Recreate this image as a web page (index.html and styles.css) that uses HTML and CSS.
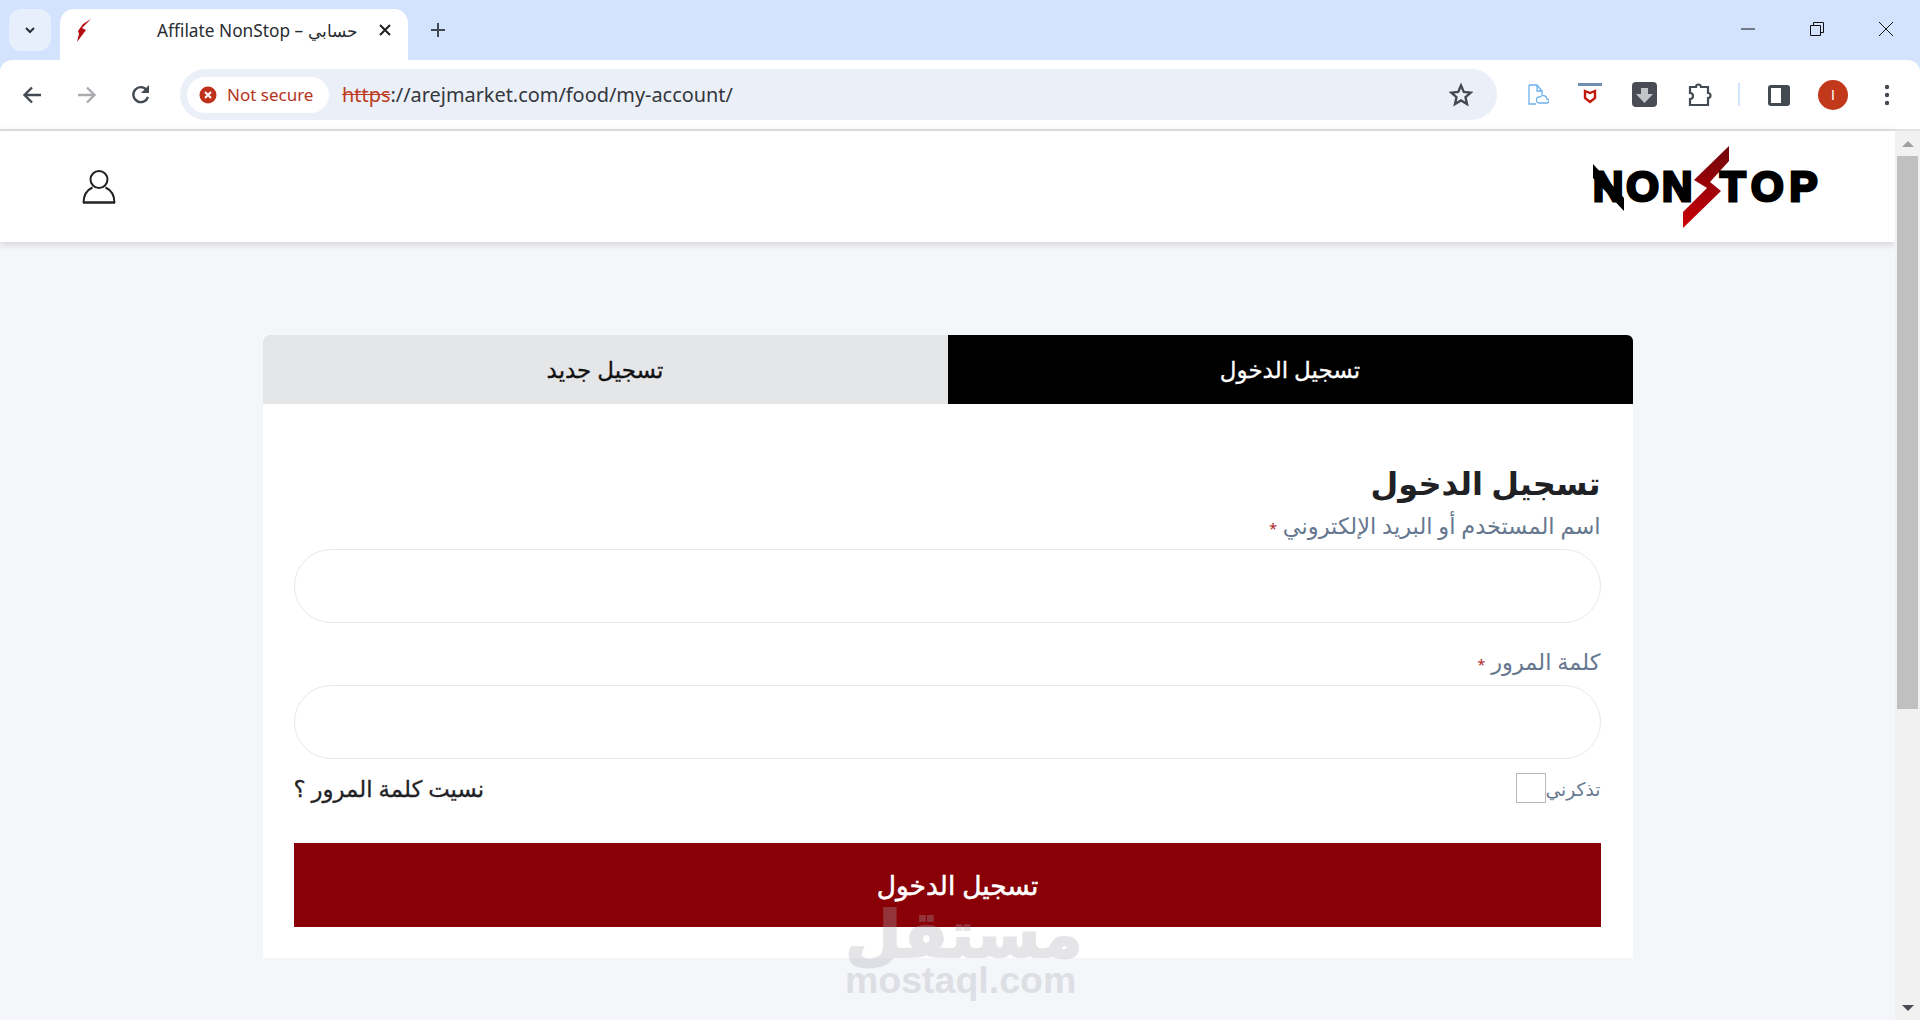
FILE: index.html
```html
<!DOCTYPE html>
<html lang="en">
<head>
    <meta charset="UTF-8">
    <title>Affiliate NonStop – حسابي</title>
    <link rel="stylesheet" href="styles.css">
</head>
<body>
    <div class="browser">
        <div class="tabstrip">
            <div class="tab-search">
                <svg width="14" height="14" viewBox="0 0 14 14"><path d="M3 5l4 4 4-4" fill="none" stroke="#2b2f36" stroke-width="2"/></svg>
            </div>
            <div class="tab">
                <svg class="favicon" width="14" height="23" viewBox="0 0 14 23"><path d="M14 0L5 9l4 2-9 12 2-8-1-3 5-7z" fill="#b50d12"/></svg>
                <span class="tab-title">Affilate NonStop – حسابي</span>
                <svg class="tab-close" width="12" height="12" viewBox="0 0 12 12"><path d="M1 1l10 10M11 1L1 11" fill="none" stroke="#1f1f1f" stroke-width="2"/></svg>
            </div>
            <svg class="tab-new" width="16" height="16" viewBox="0 0 16 16"><path d="M8 1v14M1 8h14" fill="none" stroke="#444a52" stroke-width="2"/></svg>
            <div class="window-btns">
                <svg width="16" height="16" viewBox="0 0 16 16"><path d="M1 8h14" stroke="#111" stroke-width="1"/></svg>
                <svg width="16" height="16" viewBox="0 0 16 16"><path d="M1.500 4.500h10v10h-10zM4.500 4.500v-3h10v10h-3" fill="none" stroke="#111"/></svg>
                <svg width="16" height="16" viewBox="0 0 16 16"><path d="M1 1l14 14M15 1L1 15" stroke="#111" stroke-width="1"/></svg>
            </div>
        </div>
        <div class="toolbar">
            <svg class="nav-icon" width="20" height="20" viewBox="0 0 20 20"><path d="M19 10H3M10 2.500L2.500 10l7.500 7.500" fill="none" stroke="#444a52" stroke-width="2.400"/></svg>
            <svg class="nav-icon nav-forward" width="20" height="20" viewBox="0 0 20 20"><path d="M1 10h16M10 2.500l7.500 7.500-7.500 7.500" fill="none" stroke="#a9abae" stroke-width="2.400"/></svg>
            <svg class="nav-icon nav-reload" width="20" height="20" viewBox="0 0 20 20"><path d="M17 12a7.500 7.500 0 1 1-1.200-7" fill="none" stroke="#444a52" stroke-width="2.400"/><path d="M18 0v8h-8z" fill="#444a52"/></svg>
            <div class="omnibox">
                <div class="security">
                    <svg width="18" height="18" viewBox="0 0 18 18"><circle cx="9" cy="9" r="8.500" fill="#c0311b"/><path d="M6 6l6 6M12 6l-6 6" stroke="#fff" stroke-width="2"/></svg>
                    <span>Not secure</span>
                </div>
                <div class="url"><span class="url-scheme">https</span>://arejmarket.com/food/my-account/</div>
                <svg class="star" width="24" height="24" viewBox="0 0 24 24"><path d="M12 2.500l2.800 6.400 6.900.7-5.200 4.600 1.500 6.800-6-3.500-6 3.500 1.500-6.800-5.200-4.600 6.900-.7z" fill="none" stroke="#444a52" stroke-width="2.400"/></svg>
            </div>
            <svg class="ext-doc" width="22" height="22" viewBox="0 0 22 22"><path d="M2 1h8l5 6v4M9 20H2V1M10 1v6h5M12 19a3 3 0 0 1 1-6 4 4 0 0 1 7 2 2 2 0 0 1 0 4z" fill="none" stroke="#6cb0ee" stroke-width="1.300"/></svg>
            <svg class="ext-shield" width="26" height="26" viewBox="0 0 26 26"><path d="M1 2.500h24" stroke="#6f8fb0" stroke-width="3"/><path d="M8 9l5 2 5-2v7l-5 4-5-4z" fill="none" stroke="#c4170c" stroke-width="2.400"/></svg>
            <svg class="ext-down" width="26" height="26" viewBox="0 0 26 26"><rect width="25" height="25" rx="4" fill="#4a4c55"/><path d="M9 6h7v6h5l-8.500 9L4 12h5z" fill="#c4c5c7"/></svg>
            <svg class="ext-puzzle" width="24" height="24" viewBox="0 0 24 24"><path d="M2 4h6a2.500 2.500 0 0 1 5 0h7v6a2.500 2.500 0 0 1 0 5v7H2v-6a3 3 0 0 0 0-6z" fill="none" stroke="#444a52" stroke-width="2.200"/></svg>
            <span class="ext-sep"></span>
            <svg class="ext-panel" width="22" height="22" viewBox="0 0 22 22"><rect x="0" y="1" width="22" height="21" rx="3" fill="#444a52"/><rect x="3" y="4" width="10" height="15" fill="#fff"/></svg>
            <span class="avatar">I</span>
            <svg class="ext-menu" width="6" height="22" viewBox="0 0 6 22"><circle cx="3" cy="3" r="2.200" fill="#444a52"/><circle cx="3" cy="11" r="2.200" fill="#444a52"/><circle cx="3" cy="19" r="2.200" fill="#444a52"/></svg>
        </div>
    </div>

    <div class="viewport">
        <div class="page" dir="rtl">
            <header class="site-header">
                <div class="logo" dir="ltr">
                    <svg class="logo-spike" width="31" height="47" viewBox="0 0 31 47"><path d="M0 0l31 34v13L0 14z" fill="#000"/></svg>
                    <span class="logo-text">NON</span>
                    <svg class="logo-bolt" width="46" height="82" viewBox="0 0 46 82">
                        <defs>
                            <linearGradient id="bolt" x1="0" y1="0" x2="0" y2="1">
                                <stop offset="0" stop-color="#6d0508"/>
                                <stop offset="1" stop-color="#cc0009"/>
                            </linearGradient>
                        </defs>
                        <path d="M46 0v15L27 36l11 9L0 82V66l24-24-13-8z" fill="url(#bolt)"/>
                    </svg>
                    <span class="logo-text logo-text-end">TOP</span>
                </div>
                <svg class="user-icon" width="34" height="34" viewBox="0 0 34 34"><circle cx="17" cy="9.500" r="8.500" fill="none" stroke="#222" stroke-width="2"/><path d="M1.500 33C1.500 24 6 19.500 10.500 17.500M32.500 33C32.500 24 28 19.500 23.500 17.500" fill="none" stroke="#222" stroke-width="2"/><path d="M1 32.500h32" stroke="#222" stroke-width="2.500"/></svg>
            </header>

            <main class="account">
                <div class="tabs">
                    <div class="tab-item tab-active">تسجيل الدخول</div>
                    <div class="tab-item">تسجيل جديد</div>
                </div>
                <form class="login-form">
                    <h2 class="form-title">تسجيل الدخول</h2>
                    <label class="field-label">اسم المستخدم أو البريد الإلكتروني <span class="req">*</span></label>
                    <input class="field-input" type="text">
                    <label class="field-label field-label-gap">كلمة المرور <span class="req">*</span></label>
                    <input class="field-input" type="password">
                    <div class="form-row">
                        <label class="remember">تذكرني<span class="checkbox"></span></label>
                        <a class="lost-link">نسيت كلمة المرور ؟</a>
                    </div>
                    <button class="submit-btn" type="button">تسجيل الدخول</button>
                </form>
            </main>
        </div>
        <div class="scrollbar">
            <span class="arrow-up"></span>
            <div class="thumb"></div>
            <span class="arrow-down"></span>
        </div>
        <div class="watermark">
            <div class="wm-ar">مستقل</div>
            <div class="wm-en">mostaql.com</div>
        </div>
    </div>
</body>
</html>
```

FILE: styles.css
```css
* {
    box-sizing: border-box;
}
html, body {
    height: 100%;
}
body {
    margin: 0;
    overflow: hidden;
    display: flex;
    flex-direction: column;
    font-family: "Noto Sans", "DejaVu Sans", sans-serif;
    background: #f4f6fa;
}
.browser {
    flex: none;
    background: #d3e3fd;
    font-family: "Noto Sans", "Open Sans", sans-serif;
}
.browser svg {
    flex: none;
}
.tabstrip {
    height: 60px;
    display: flex;
    align-items: flex-end;
    padding-left: 9px;
}
.tab-search {
    width: 42px;
    height: 42px;
    margin-bottom: 9px;
    background: #e7effc;
    border-radius: 12px;
    display: flex;
    align-items: center;
    justify-content: center;
}
.tab {
    width: 348px;
    height: 51px;
    margin-left: 9px;
    background: #fff;
    border-radius: 14px 14px 0 0;
    display: flex;
    align-items: center;
    padding: 0 17px 9px 17px;
}
.tab-title {
    margin-left: 66px;
    font-size: 17.300px;
    color: #2a2d32;
    white-space: nowrap;
}
.tab-close {
    margin-left: auto;
}
.tab-new {
    margin-left: 22px;
    align-self: center;
}
.window-btns {
    margin-left: auto;
    align-self: flex-start;
    display: flex;
    gap: 53px;
    padding: 21px 26px 0 0;
}
.toolbar {
    height: 71px;
    background: #fff;
    border-bottom: 2px solid #e2e2e2;
    border-radius: 12px 12px 0 0;
    display: flex;
    align-items: center;
    padding-left: 22px;
}
.nav-forward {
    margin-left: 35px;
}
.nav-reload {
    margin-left: 34px;
}
.omnibox {
    width: 1317px;
    height: 51px;
    margin-left: 29px;
    background: #ebeff8;
    border-radius: 26px;
    display: flex;
    align-items: center;
    padding: 0 24px 0 7px;
}
.security {
    width: 142px;
    height: 36px;
    flex: none;
    padding-left: 12px;
    background: #fff;
    border-radius: 18px;
    display: flex;
    align-items: center;
    gap: 10px;
    font-size: 17px;
    color: #b5341c;
    white-space: nowrap;
}
.url {
    flex: 1;
    margin-left: 13px;
    font-size: 19.900px;
    color: #33373d;
}
.url-scheme {
    color: #bf3a1e;
    text-decoration: line-through;
}
.ext-doc {
    margin-left: 30px;
}
.ext-shield {
    margin-left: 28px;
}
.ext-down {
    margin-left: 29px;
}
.ext-puzzle {
    margin-left: 30px;
}
.ext-sep {
    width: 2px;
    height: 23px;
    margin-left: 26px;
    background: #d3e3fd;
}
.ext-panel {
    margin-left: 28px;
}
.avatar {
    width: 30px;
    height: 30px;
    margin-left: 28px;
    border-radius: 50%;
    background: #c2381a;
    color: #fff;
    font-family: "Liberation Sans", sans-serif;
    font-size: 14px;
    display: flex;
    align-items: center;
    justify-content: center;
}
.ext-menu {
    margin-left: 36px;
}
.viewport {
    flex: 1;
    min-height: 0;
    position: relative;
    display: flex;
}
.page {
    flex: 1;
    min-width: 0;
    background: #f4f6fa;
}
.site-header {
    height: 111px;
    background: #fff;
    box-shadow: 0 2px 8px rgba(0, 0, 0, 0.16);
    display: flex;
    align-items: center;
    justify-content: space-between;
    padding: 0 77px 0 82px;
}
.logo {
    position: relative;
    display: flex;
    align-items: center;
    width: 225px;
    height: 82px;
}
.logo-spike {
    position: absolute;
    left: 0;
    top: 18px;
}
.logo-text {
    position: relative;
    font-family: "Liberation Sans", sans-serif;
    font-weight: 700;
    font-size: 42px;
    line-height: 1;
    color: #000;
    -webkit-text-stroke: 3px #000;
    letter-spacing: 3px;
}
.logo-bolt {
    position: absolute;
    left: 90px;
    top: 0;
}
.logo-text-end {
    position: absolute;
    left: 127px;
    top: 20px;
    letter-spacing: 6px;
}
.account {
    width: 1370px;
    margin: 93px auto 0;
    background: #fff;
}
.tabs {
    display: flex;
    height: 69px;
}
.tab-item {
    flex: 1;
    background: #e5e6e8;
    color: #111;
    font-size: 23px;
    padding-bottom: 2px;
    display: flex;
    align-items: center;
    justify-content: center;
    -webkit-text-stroke: 0.3px currentColor;
}
.tab-item:last-child {
    border-top-left-radius: 6px;
}
.tab-active {
    background: #000;
    color: #fff;
    border-top-right-radius: 6px;
}
.login-form {
    display: flex;
    flex-direction: column;
    padding: 55px 32px 31px 31px;
}
.form-title {
    margin: 0;
    font-size: 32px;
    line-height: 48px;
    font-weight: 700;
    color: #1f2124;
}
.field-label {
    font-size: 22.500px;
    line-height: 30px;
    margin-top: 4px;
    color: #66788f;
}
.field-label-gap {
    margin-top: 24px;
}
.req {
    color: #b0232a;
    font-size: 14px;
}
.field-input {
    display: block;
    width: 100%;
    height: 74px;
    margin-top: 5px;
    background: #fff;
    border: 1px solid #e8e8e8;
    border-radius: 37px;
}
.form-row {
    height: 44px;
    margin-top: 7px;
    display: flex;
    align-items: center;
    justify-content: space-between;
}
.remember {
    display: flex;
    align-items: center;
    font-size: 18.700px;
    color: #66788f;
}
.checkbox {
    width: 30px;
    height: 30px;
    background: #fff;
    border: 1px solid #b9b9b9;
}
.lost-link {
    font-size: 22.800px;
    color: #1f2124;
    -webkit-text-stroke: 0.3px currentColor;
}
.submit-btn {
    height: 84px;
    margin-top: 33px;
    padding: 0 0 0 21px;
    background: #8a0007;
    border: none;
    color: #fff;
    font-family: inherit;
    font-size: 26.500px;
    -webkit-text-stroke: 0.5px currentColor;
}
.scrollbar {
    flex: none;
    width: 25px;
    background: #f1f1f1;
    padding: 0 2px;
    position: relative;
}
.arrow-up, .arrow-down {
    position: absolute;
    left: 7px;
    width: 0;
    height: 0;
    border-left: 6px solid transparent;
    border-right: 6px solid transparent;
}
.arrow-up {
    top: 10px;
    border-bottom: 6px solid #a39ea3;
}
.arrow-down {
    bottom: 9px;
    border-top: 6px solid #4a4c55;
}
.thumb {
    width: 21px;
    height: 553px;
    margin-top: 25px;
    background: #c0c0c0;
}
.watermark {
    position: absolute;
    left: 845px;
    top: 779px;
    width: 230px;
    text-align: center;
    color: #aaacb2;
    opacity: 0.3;
    pointer-events: none;
}
.wm-ar {
    font-family: "DejaVu Sans", sans-serif;
    font-weight: 700;
    font-size: 65px;
    line-height: 50px;
    padding-right: 7px;
    white-space: nowrap;
    -webkit-text-stroke: 2px #aaacb2;
}
.wm-en {
    font-family: "Liberation Sans", sans-serif;
    font-weight: 700;
    font-size: 37.500px;
    line-height: 40px;
}
```
